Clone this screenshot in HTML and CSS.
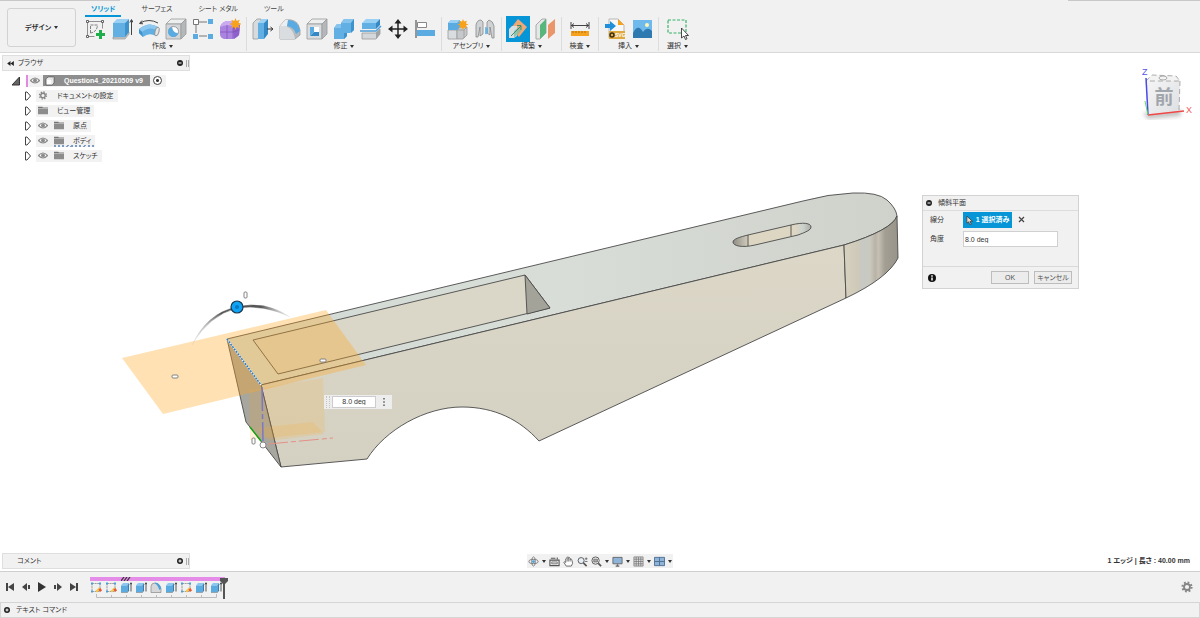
FILE: index.html
```html
<!DOCTYPE html>
<html lang="ja">
<head>
	<meta charset="utf-8">
	<title>Question4_20210509 v9</title>
	<link rel="stylesheet" href="styles.css">
</head>
<body>
	<svg class="defs" aria-hidden="true">
		<symbol id="i-eye" viewBox="0 0 10 8">
			<path d="M.5 4Q5-1 9.500 4Q5 9 .5 4Z" fill="#fff" stroke="#8c8c8c" stroke-width="1.200"/>
			<circle cx="5" cy="4" r="2" fill="#8c8c8c"/>
		</symbol>
		<symbol id="i-folder" viewBox="0 0 10 8">
			<path d="M0 0h4l1 1h5v1H0z" fill="#777"/>
			<path d="M0 2.500h10V8H0z" fill="#8c8c8c"/>
		</symbol>
		<symbol id="i-gear" viewBox="0 0 12 12">
			<circle cx="6" cy="6" r="4.600" fill="none" stroke="#858585" stroke-width="2" stroke-dasharray="1.800 1.810"/>
			<circle cx="6" cy="6" r="3" fill="none" stroke="#858585" stroke-width="1.800"/>
		</symbol>
		<symbol id="i-open" viewBox="0 0 8 10">
			<path d="M1.500 1H3L6.500 5L3 9H1.500Z" fill="#fff" stroke="#444" stroke-linejoin="round"/>
		</symbol>
		<symbol id="i-minus" viewBox="0 0 8 8">
			<circle cx="4" cy="4" r="3" fill="#222"/>
			<path d="M2.500 4h3" stroke="#fff"/>
		</symbol>
		<symbol id="i-plus" viewBox="0 0 8 8">
			<circle cx="4" cy="4" r="3" fill="#222"/>
			<path d="M2.500 4h3M4 2.500v3" stroke="#fff"/>
		</symbol>
		<symbol id="i-sketch" viewBox="0 0 12 12">
			<path d="M2 2h8M2 2v8M2 10h8M10 2v8" stroke="#888" stroke-width=".8" stroke-dasharray="2 .6"/>
			<path d="M1 1h2v2H1zM9 1h2v2H9zM1 9h2v2H1z" fill="#4c9fd8"/>
			<path d="M5.500 9.500L9 6l1.500 1.500L7 11z" fill="#f6c744"/>
			<path d="M8.500 8l2-1.500L12 9l-2 1.500z" fill="#e8523b"/>
		</symbol>
		<symbol id="i-extrude" viewBox="0 0 12 12">
			<path d="M1 4l2-2.500h6L7.500 4z" fill="#8bc7f0"/>
			<path d="M1 4h6.500v7H1z" fill="#5aabe2"/>
			<path d="M7.500 4L9 1.500V9l-1.500 2z" fill="#2f7fb8"/>
			<path d="M1 11h6.500L9 9" fill="none" stroke="#888" stroke-width=".6"/>
			<path d="M11 10V1.500M9.800 3L11 1.200 12 3" stroke="#333" stroke-width=".8" fill="none"/>
		</symbol>
		<symbol id="i-fillet" viewBox="0 0 12 12">
			<path d="M1 11V5Q1 1.500 5 1.500Q10.500 2 11 8v3z" fill="#d5d7d8" stroke="#888" stroke-width=".7"/>
			<path d="M4.500 1.500Q9 .5 11.300 7l-2 1.500Q8 3.500 4.500 1.500z" fill="#4c9fd8"/>
		</symbol>
	</svg>

	<header class="ribbon">
		<button class="workspace">デザイン <i class="caret"></i></button>
		<div class="ribbon-main">
			<nav class="tabs">
				<a class="tab active" href="#solid">ソリッド</a>
				<a class="tab" href="#surface">サーフェス</a>
				<a class="tab" href="#sheet">シート メタル</a>
				<a class="tab" href="#tools">ツール</a>
			</nav>
			<div class="groups">
				<div class="group">
					<div class="icons">
						<button class="tool" aria-label="スケッチを作成"><svg viewBox="0 0 22 22"><path d="M3.500 3.500h15v7M3.500 3.500v15h7" fill="none" stroke="#777" stroke-width=".8"/><path d="M6.500 15V7h7Q13 14 6.500 15z" fill="none" stroke="#666" stroke-width=".8" stroke-dasharray="3 1"/><path d="M2.500 2.500h2v2h-2zM17.500 2.500h2v2h-2zM2.500 17.500h2v2h-2z" fill="#fff" stroke="#555" stroke-width=".9"/><path d="M16.500 12v9M12 16.500h9" stroke="#1fae4c" stroke-width="3"/></svg></button>
						<button class="tool" aria-label="押し出し"><svg viewBox="0 0 22 22"><path d="M2 19h12l4-5v2l-4 5H2z" fill="#c9cccd" stroke="#888" stroke-width=".6"/><path d="M2 5l4-4h12l-4 4z" fill="#9ad0f3"/><path d="M2 5h12v14H2z" fill="#62afe4"/><path d="M14 5l4-4v13l-4 5z" fill="#3f93cd"/><path d="M20.500 17V2M18.800 4.500l1.700-3 1.500 3" fill="none" stroke="#444"/></svg></button>
						<button class="tool" aria-label="回転"><svg viewBox="0 0 22 22"><path d="M2 5Q11 0 20 5" fill="none" stroke="#444"/><path d="M4 2.500L1.500 5.500 5 5.800" fill="none" stroke="#444"/><path d="M1 11Q11 3 20 9l-2 9Q11 14 5 19L1 15z" fill="#62afe4"/><path d="M1 11Q11 3 20 9l-1 3Q11 8 4 14z" fill="#8cc8ef"/><path d="M1 11l3 3 1 5-4-4z" fill="#3f93cd"/><ellipse cx="19" cy="13.500" rx="2" ry="4.500" fill="#e4e6e7" stroke="#888" stroke-width=".8" transform="rotate(15 19 13.500)"/></svg></button>
						<button class="tool" aria-label="穴"><svg viewBox="0 0 22 22"><path d="M1 6l5-5h15l-5 5z" fill="#eceeef" stroke="#999" stroke-width=".8"/><path d="M1 6h15v15H1z" fill="#d3d6d8" stroke="#999" stroke-width=".8"/><path d="M16 6l5-5v15l-5 5z" fill="#b4b8bb" stroke="#999" stroke-width=".8"/><circle cx="8.500" cy="13.500" r="5" fill="#fff" stroke="#888" stroke-width=".8"/><path d="M7 9a5 5 0 1 0 6 6Q8 15 7 9z" fill="#5aabe2"/></svg></button>
						<button class="tool" aria-label="パターン"><svg viewBox="0 0 22 22"><path d="M7 4h8M4 7v8M7 18h8" fill="none" stroke="#777"/><path d="M1.500 1.500h5v5h-5z" fill="#fff" stroke="#777"/><path d="M16 1h5v5h-5zM1 16h5v5H1zM16 16h5v5h-5z" fill="#5aabe2"/></svg></button>
						<button class="tool" aria-label="フォームを作成"><svg viewBox="0 0 22 22"><path d="M1 9Q2 5 7 3h9q5 2 5 6l-1 8q-3 4-8 4H5q-4-1-4-5z" fill="#ab84e0"/><path d="M1 9q6-3 13-1l2-5H7Q2 5 1 9z" fill="#cbabf0"/><path d="M14 8l7-1-1 10-5 4z" fill="#8f60cb"/><path d="M8 7v14M1 14h13l6-2M14 8v13" fill="none" stroke="#7d4fb8" stroke-width=".7"/><path d="M16.500 0l1.200 3 3-1.200-1.200 3 3 1.200-3 1.200 1.200 3-3-1.200-1.200 3-1.200-3-3 1.200 1.200-3-3-1.200 3-1.200-1.200-3 3 1.200z" fill="#f6a21d"/></svg></button>
					</div>
					<button class="group-name">作成 <i class="caret"></i></button>
				</div>
				<div class="group">
					<div class="icons">
						<button class="tool" aria-label="プレス/プル"><svg viewBox="0 0 22 22"><path d="M1 5l4-4h4v16l-3 4H1z" fill="#d8dbdd" stroke="#999" stroke-width=".8"/><path d="M6 5l4-4h6l-4 4z" fill="#9ad0f3"/><path d="M6 5h6v16H6z" fill="#62afe4"/><path d="M12 5l4-4v15l-4 5z" fill="#3488c4"/><path d="M15 11h5M18.500 9l2.500 2-2.500 2" fill="none" stroke="#333"/></svg></button>
						<button class="tool" aria-label="フィレット"><svg viewBox="0 0 22 22"><path d="M1 8l5-6Q19 0 21 12v5l-5 4H1z" fill="#b7bbbe" stroke="#999" stroke-width=".8"/><path d="M1 8q13-1 15 13H1z" fill="#dadddf"/><path d="M1 8l5-6h4L8 8.500z" fill="#eceeef"/><path d="M9 2Q19 2 21 13l-4 3Q15 9 8 8z" fill="#5aabe2"/></svg></button>
						<button class="tool" aria-label="シェル"><svg viewBox="0 0 22 22"><path d="M1 6l5-5h15l-5 5z" fill="#eceeef" stroke="#999" stroke-width=".8"/><path d="M1 6h15v15H1z" fill="#dadddf" stroke="#999" stroke-width=".8"/><path d="M16 6l5-5v15l-5 5z" fill="#b4b8bb" stroke="#999" stroke-width=".8"/><path d="M4 9h9v9H4z" fill="#fff"/><path d="M4 9h4v5l-4 4z" fill="#5aabe2"/><path d="M4 18l4-4h5v4z" fill="#3488c4"/></svg></button>
						<button class="tool" aria-label="結合"><svg viewBox="0 0 22 22"><path d="M8 5l3-4h10v11l-4 3h-3v3l-3 3H1V10l3-4h4z" fill="#62afe4"/><path d="M8 5l3-4h10l-3 4zM1 10l3-4h4v4z" fill="#86c4ed"/><path d="M18 5l3-4v11l-3 3zM11 15h3v3l-3 3z" fill="#3f93cd"/></svg></button>
						<button class="tool" aria-label="面をオフセット"><svg viewBox="0 0 22 22"><path d="M2 5l4-4h14l-4 4z" fill="#9ad0f3"/><path d="M2 5h14v6H2z" fill="#62afe4"/><path d="M16 5l4-4v6l-4 4z" fill="#3488c4"/><path d="M0 13h16l5-5" fill="none" stroke="#4c9fd8" stroke-width="1.500"/><path d="M2 15h14l4-4v5l-4 5H2z" fill="#d5d8da" stroke="#999" stroke-width=".8"/><path d="M16 15l4-4v5l-4 5z" fill="#9ea3a6"/></svg></button>
						<button class="tool" aria-label="移動"><svg viewBox="0 0 22 22"><path d="M11 3v16M3 11h16" stroke="#222" stroke-width="1.500"/><path d="M11 1l3.500 4.500h-7zM11 21l3.500-4.500h-7zM1 11l4.500-3.500v7zM21 11l-4.500-3.500v7z" fill="#222"/></svg></button>
						<button class="tool" aria-label="位置合わせ"><svg viewBox="0 0 22 22"><path d="M2 2v18" stroke="#777" stroke-width="1.500"/><path d="M3.500 4.500h9v5h-9z" fill="#fff" stroke="#888"/><path d="M3 12h18v6H3z" fill="#5aabe2"/></svg></button>
					</div>
					<button class="group-name">修正 <i class="caret"></i></button>
				</div>
				<div class="group">
					<div class="icons">
						<button class="tool" aria-label="新規コンポーネント"><svg viewBox="0 0 22 22"><path d="M1 12h9v9H1z" fill="#dadddf" stroke="#999" stroke-width=".8"/><path d="M10 12l3-3h7v8l-4 4h-6z" fill="#c5c9cb" stroke="#999" stroke-width=".8"/><path d="M10 12h7l3-3M17 12v8" fill="none" stroke="#999" stroke-width=".8"/><path d="M1 5l3-3h9v7l-3 3H1z" fill="#5aabe2"/><path d="M1 5l3-3h9l-3 3z" fill="#9ad0f3"/><path d="M16 1l1 2.500 2.800-.8-.8 2.800 2.500 1-2.500 1 .8 2.800-2.800-.8-1 2.500-1-2.500-2.800.8.800-2.800-2.500-1 2.500-1-.8-2.800 2.800.8z" fill="#f6a21d"/></svg></button>
						<button class="tool" aria-label="ジョイント"><svg viewBox="0 0 22 22"><path d="M2 19V7q1-5 5-5l2 2v12l-3 2V9L4 19zM20 20V8q-1-5-5-6l-2 2v11l3 2V9l2 11z" fill="#d0d3d5" stroke="#888" stroke-width=".8"/><path d="M11 9q3 0 3 2v4q-1 2-3 1" fill="#5aabe2" opacity=".8"/></svg></button>
					</div>
					<button class="group-name">アセンブリ <i class="caret"></i></button>
				</div>
				<div class="group">
					<div class="icons">
						<button class="tool selected" aria-label="傾斜平面"><svg viewBox="0 0 22 22"><path d="M11 1l9 8-8 10-8-9z" fill="#f0a877"/><path d="M2 11l3-3h5v10l-3 2H2z" fill="#d9dee1"/><path d="M7 13l7-6v6l-7 7z" fill="#7fbda7" opacity=".8"/><path d="M4 18l10-10M14 12V7.500h-4" fill="none" stroke="#3b8f6d"/></svg></button>
						<button class="tool" aria-label="オフセット平面"><svg viewBox="0 0 22 22"><path d="M2 7l6-6h4v14l-6 6H2z" fill="#e4e6e7" stroke="#999" stroke-width=".8"/><path d="M6 7l6-6v14l-6 6z" fill="#57b77b"/><path d="M14 7l7-6v14l-7 6z" fill="#ea966a"/></svg></button>
					</div>
					<button class="group-name">構築 <i class="caret"></i></button>
				</div>
				<div class="group">
					<div class="icons">
						<button class="tool" aria-label="計測"><svg viewBox="0 0 22 22"><path d="M2 4v7M20 4v7M2 7.500h18M5 5.500l-2.500 2L5 9.500M17 5.500l2.500 2-2.500 2" fill="none" stroke="#444"/><path d="M2 13h18v5H2z" fill="#f6a21d"/><path d="M4 13v2M7 13v2M10 13v2M13 13v2M16 13v2" stroke="#9a6510" stroke-width=".8"/></svg></button>
					</div>
					<button class="group-name">検査 <i class="caret"></i></button>
				</div>
				<div class="group">
					<div class="icons">
						<button class="tool" aria-label="SVG を挿入"><svg viewBox="0 0 22 22"><path d="M5 1h9l6 6v13H5z" fill="#f7f7f7" stroke="#aaa" stroke-width=".8"/><path d="M14 1l6 6h-6z" fill="#f6a21d"/><path d="M1 6h5V3l6 5-6 5v-3H1z" fill="#1f8fdc"/><path d="M5 13h16v8H5z" fill="#e0a93f"/><circle cx="8" cy="17" r="2" fill="none" stroke="#40300c" stroke-width="1.500"/><text class="badge-text" x="11" y="19">SVG</text></svg></button>
						<button class="tool" aria-label="キャンバス"><svg viewBox="0 0 22 22"><path d="M2 2h19v18H2z" fill="#6fbaec"/><path d="M2 15Q7 5 12 14q4-6 9-1v7H2z" fill="#2d79b0"/><circle cx="16" cy="7" r="2" fill="#fff5b8"/></svg></button>
					</div>
					<button class="group-name">挿入 <i class="caret"></i></button>
				</div>
				<div class="group last">
					<div class="icons">
						<button class="tool" aria-label="選択"><svg viewBox="0 0 22 22"><path d="M1 2h18v13H1z" fill="none" stroke="#39b36a" stroke-width="1.200" stroke-dasharray="3 1.500"/><path d="M14.500 10v10l2.500-2 1.500 3.500 1.500-.7-1.500-3.300h3z" fill="#fff" stroke="#333" stroke-width=".9"/></svg></button>
					</div>
					<button class="group-name">選択 <i class="caret"></i></button>
				</div>
			</div>
		</div>
	</header>

	<main class="viewport">
		<svg class="model" viewBox="0 53 1200 518" role="img" aria-label="モデル">
			<defs>
				<linearGradient id="top" x1="0" x2="1"><stop offset="0" stop-color="#d3dbd6"/><stop offset=".5" stop-color="#d8ddd7"/><stop offset="1" stop-color="#cfd2cb"/></linearGradient>
				<linearGradient id="side" x1="0" y1="0" x2="0" y2="1"><stop offset="0" stop-color="#dcd7c7"/><stop offset="1" stop-color="#d4d1c3"/></linearGradient>
				<linearGradient id="nose" x1="0" x2="1"><stop offset="0" stop-color="#d7d1c0"/><stop offset=".25" stop-color="#cfc9b9"/><stop offset=".36" stop-color="#c6c9c4"/><stop offset=".48" stop-color="#cac9c0"/><stop offset=".58" stop-color="#b9b3a6"/><stop offset=".64" stop-color="#c5c0b3"/><stop offset=".76" stop-color="#a39e92"/><stop offset="1" stop-color="#98948a"/></linearGradient>
				<linearGradient id="slot" x1="0" x2="1"><stop offset="0" stop-color="#8f8d84"/><stop offset=".19" stop-color="#d0cbbb"/><stop offset=".2" stop-color="#dcd6c3"/><stop offset=".8" stop-color="#dcd6c3"/><stop offset=".9" stop-color="#ccd1cd"/><stop offset="1" stop-color="#a9aaa3"/></linearGradient>
				<linearGradient id="arc" x1="0" x2="1"><stop offset="0" stop-color="#bbb" stop-opacity=".2"/><stop offset=".3" stop-color="#555"/><stop offset=".7" stop-color="#555"/><stop offset="1" stop-color="#bbb" stop-opacity=".2"/></linearGradient>
			</defs>
			<g class="solid">
				<path d="M227 339L803 201Q828 194 853 193Q878 192 887 200Q896 208 897 216Q892 230 844 245L261 385Z" fill="url(#top)"/>
				<path d="M261 385L844 245L846 298L539 441C520 420 495 407 462 407C425 407 385 430 367 459L281 467Z" fill="url(#side)"/>
				<path d="M844 245Q892 230 897 216L898 258Q888 278 846 298Z" fill="url(#nose)"/>
				<path d="M227 339L261 385L281 467L246 422Z" fill="#a7a69f"/>
				<path d="M253 340L525 275L550 308L278 374Z" fill="#dad7c8"/>
				<path d="M525 275L550 308L527 314Z" fill="#a4a39a"/>
				<path d="M748 235L791 225C803 222 811 223 811 227C811 230 806 232 798 235L755 245C742 248 733 246 733 242C733 239 740 237 748 235Z" fill="url(#slot)"/>
				<path d="M748 235v11M791 225v11" fill="none"/>
			</g>
			<!-- preview planes -->
			<path class="plane" d="M122 358L326 310L366 365L163 414Z"/>
			<path class="plane faint" d="M249 390L323 378L325 432L250 440Z"/>
			<path class="plane faint" d="M257 428L313 422L324 434L270 441Z"/>
			<path d="M227 339L261 385" stroke="#fff" stroke-width="1.500"/>
			<path d="M227 339L261 385" stroke="#2d7cc0" stroke-width="1.500" stroke-dasharray="2 1"/>
			<!-- origin axes -->
			<path d="M262 387L263 441" stroke="#7b79c4" stroke-width="1.500" stroke-dasharray="24 3 5 3"/>
			<path d="M268 444L333 438" stroke="#e58f85" stroke-dasharray="20 3 5 3"/>
			<path d="M250 427L261 441" stroke="#12a512" stroke-width="1.500"/>
			<circle cx="263" cy="445" r="3" fill="#fff" stroke="#888"/>
			<!-- rotation handle -->
			<path d="M192 345Q207 313 237 307Q265 300 290 317Q264 304 237 308Q209 315 192 345Z" fill="url(#arc)" stroke="url(#arc)" stroke-width=".5"/>
			<circle cx="237" cy="307" r="6" fill="#0fa3f5" stroke="#17384d" stroke-width="1.200"/>
			<circle cx="237" cy="307" r="2" fill="#0878bd"/>
			<g fill="#fff" stroke="#777" stroke-width=".9">
				<rect x="244" y="292" width="3" height="6" rx="1"/>
				<rect x="252" y="438" width="3" height="6" rx="1"/>
				<rect x="172" y="375" width="6" height="3" rx="1"/>
				<rect x="320" y="359" width="6" height="3" rx="1"/>
			</g>
		</svg>

		<aside class="browser">
			<div class="bar">
				<svg class="icon-rewind" viewBox="0 0 8 6"><path d="M4 0v6L0 3zM8 0v6L4 3z" fill="#222"/></svg>
				<span class="bar-title">ブラウザ</span>
				<button class="round" aria-label="閉じる"><svg viewBox="0 0 8 8"><use href="#i-minus"/></svg></button>
				<i class="grip"></i>
			</div>
			<ul class="tree">
				<li class="node root">
					<button class="expander" aria-label="折りたたむ"><svg viewBox="0 0 8 10"><path d="M0 9L7.500 1V9Z" fill="#666" stroke="#333"/></svg></button>
					<div class="chip">
						<svg class="icon-eye" viewBox="0 0 10 8"><use href="#i-eye"/></svg>
						<span class="root-name"><svg class="icon-cube" viewBox="0 0 10 10"><path d="M1 3l2-2h6v6L7 9H1z" fill="#fff" stroke="#555" stroke-width=".8"/><path d="M1 3h6v6M7 3l2-2" fill="none" stroke="#bbb" stroke-width=".6"/></svg>Question4_20210509 v9</span>
						<input class="activate" type="radio" name="active" aria-label="アクティブ" checked>
					</div>
				</li>
				<li class="node">
					<button class="expander" aria-label="展開"><svg viewBox="0 0 8 10"><use href="#i-open"/></svg></button>
					<div class="chip"><svg class="icon-eye" viewBox="0 0 12 12"><use href="#i-gear"/></svg><span>ドキュメントの設定</span></div>
				</li>
				<li class="node">
					<button class="expander" aria-label="展開"><svg viewBox="0 0 8 10"><use href="#i-open"/></svg></button>
					<div class="chip"><svg class="icon-eye" viewBox="0 0 10 8"><use href="#i-folder"/></svg><span>ビュー管理</span></div>
				</li>
				<li class="node">
					<button class="expander" aria-label="展開"><svg viewBox="0 0 8 10"><use href="#i-open"/></svg></button>
					<div class="chip"><svg class="icon-eye" viewBox="0 0 10 8"><use href="#i-eye"/></svg><svg class="icon-eye" viewBox="0 0 10 8"><use href="#i-folder"/></svg><span>原点</span></div>
				</li>
				<li class="node">
					<button class="expander" aria-label="展開"><svg viewBox="0 0 8 10"><use href="#i-open"/></svg></button>
					<div class="chip"><svg class="icon-eye" viewBox="0 0 10 8"><use href="#i-eye"/></svg><div class="pending"><svg class="icon-eye" viewBox="0 0 10 8"><use href="#i-folder"/></svg><span>ボディ</span></div></div>
				</li>
				<li class="node">
					<button class="expander" aria-label="展開"><svg viewBox="0 0 8 10"><use href="#i-open"/></svg></button>
					<div class="chip"><svg class="icon-eye" viewBox="0 0 10 8"><use href="#i-eye"/></svg><svg class="icon-eye" viewBox="0 0 10 8"><use href="#i-folder"/></svg><span>スケッチ</span></div>
				</li>
			</ul>
		</aside>

		<svg class="viewcube" viewBox="0 0 58 58" role="img" aria-label="ビューキューブ">
			<defs>
				<linearGradient id="face" x1="0" y1="0" x2="1" y2="1"><stop offset="0" stop-color="#f7f7f8"/><stop offset="1" stop-color="#dedfe2"/></linearGradient>
				<filter id="soft"><feGaussianBlur stdDeviation="2"/></filter>
			</defs>
			<path d="M5 48L42 44L43 51L10 54Z" fill="#999" opacity=".6" filter="url(#soft)"/>
			<path d="M8 16L14 10L38 11L42 16L41 46L10 50Z" fill="url(#face)"/>
			<path d="M8 16L14 10L38 11L42 16Z" fill="#f3f3f4" stroke="#999" stroke-width=".8" stroke-dasharray="5 3"/>
			<path d="M42 16L41 46" stroke="#999" stroke-width=".8" stroke-dasharray="5 3"/>
			<ellipse cx="25" cy="13" rx="4" ry="2" fill="none" stroke="#aaa"/>
			<text class="cube-face" x="26" y="39">前</text>
			<path d="M8 13L10 50" stroke="#4a48e8" stroke-width="1.500"/>
			<path d="M10 50L46 46" stroke="#f04848" stroke-width="1.500"/>
			<path d="M10 50L7 36" stroke="#63d863"/>
			<text class="axis-z" x="4" y="10">Z</text>
			<text class="axis-x" x="48" y="48">X</text>
		</svg>

		<form class="angle" action="#">
			<i class="handle"></i>
			<input aria-label="角度" value="8.0 deg">
			<button type="button" aria-label="その他"><svg viewBox="0 0 4 10"><path d="M1 0h2v2H1zM1 4h2v2H1zM1 8h2v2H1z" fill="#666"/></svg></button>
		</form>

		<form class="dialog" action="#">
			<div class="dialog-head">
				<svg class="icon-dot" viewBox="0 0 8 8"><use href="#i-minus"/></svg>
				<span>傾斜平面</span>
			</div>
			<div class="dialog-body">
				<label for="pick">線分</label>
				<div class="field">
					<button id="pick" class="pick" type="button"><svg viewBox="0 0 8 10"><path d="M1 0v8l2-1.500L4.500 10 6 9.300 4.500 6H7.500z" fill="#f2d9c8" stroke="#333" stroke-width=".8"/></svg>1 選択済み</button>
					<button class="clear" type="button" aria-label="クリア"><svg viewBox="0 0 8 8"><path d="M1 1l5 5M6 1L1 6" stroke="#444" stroke-width="1.200"/></svg></button>
				</div>
				<label for="deg">角度</label>
				<div class="field"><input id="deg" class="deg" value="8.0 deg"></div>
			</div>
			<div class="dialog-foot">
				<svg class="icon-info" viewBox="0 0 10 10"><circle cx="5" cy="5" r="4" fill="#111"/><path d="M5 4.500v3M5 2.300v1.400" stroke="#fff" stroke-width="1.500"/></svg>
				<button class="push" type="submit">OK</button>
				<button class="push" type="button">キャンセル</button>
			</div>
		</form>

		<div class="bar comments">
			<span class="bar-title">コメント</span>
			<button class="round" aria-label="追加"><svg viewBox="0 0 8 8"><use href="#i-plus"/></svg></button>
			<i class="grip"></i>
		</div>

		<div class="navbar">
			<button aria-label="オービット"><svg viewBox="0 0 12 12"><ellipse cx="6" cy="6" rx="5" ry="2.300" fill="none" stroke="#777"/><ellipse cx="6" cy="6" rx="2" ry="5" fill="none" stroke="#777"/><circle cx="6" cy="6" r="1.500" fill="#4c9fd8"/></svg><i class="caret"></i></button>
			<button aria-label="ビュー正面"><svg viewBox="0 0 12 12"><path d="M1 4.500h10v6H1zM2 2.500h5M9 1.500v2" fill="none" stroke="#555" stroke-width="1.200"/><path d="M3 6.500h6v2H3z" fill="none" stroke="#777"/></svg></button>
			<button aria-label="画面移動"><svg viewBox="0 0 12 12"><path d="M3.500 11L1 7q0-1.500 2 0V3q.8-1.500 1.600 0V1.500q.8-1.500 1.600 0v1q.8-1.500 1.600 0v1.300q1.200-1.300 1.700 0L10.500 8 9 11z" fill="#fff" stroke="#555" stroke-width=".9"/><path d="M4.600 3v3M6.200 2v4M7.800 3v3" stroke="#555" stroke-width=".8"/></svg></button>
			<button aria-label="ズーム"><svg viewBox="0 0 12 12"><circle cx="4.500" cy="5" r="3.300" fill="#e5eff5" stroke="#555"/><path d="M7 7.500l3.500 3.500" stroke="#555" stroke-width="1.800"/><path d="M8.500 3h3M10 1.500v3M8.500 6h3" stroke="#555" stroke-width=".8"/></svg></button>
			<button aria-label="フィット"><svg viewBox="0 0 12 12"><circle cx="5" cy="5" r="4" fill="#eee" stroke="#555"/><path d="M3 3.500h4v3H3z" fill="#aaa" stroke="#666" stroke-width=".8"/><path d="M8 8l3 3" stroke="#555" stroke-width="1.800"/></svg><i class="caret"></i></button>
			<button aria-label="表示設定"><svg viewBox="0 0 12 12"><path d="M1 1.500h10v7H1z" fill="#8fb4da" stroke="#666"/><path d="M4 11h4M6 9v2" stroke="#666" stroke-width="1.500"/></svg><i class="caret"></i></button>
			<button aria-label="グリッド"><svg viewBox="0 0 12 12"><path d="M1 1h10v10H1z" fill="#ddd"/><path d="M1 1h10v10H1zM3.500 1v10M6 1v10M8.500 1v10M1 3.500h10M1 6h10M1 8.500h10" fill="none" stroke="#777" stroke-width=".8"/></svg><i class="caret"></i></button>
			<button aria-label="ビューポート"><svg viewBox="0 0 12 12"><path d="M.5 1.500h11v9H.5z" fill="#8fb4da" stroke="#4d6d91"/><path d="M6 1.500v9M.5 6h11" stroke="#4d6d91"/></svg><i class="caret"></i></button>
		</div>

		<p class="status">1 エッジ | 長さ : 40.00 mm</p>
	</main>

	<section class="timeline">
		<div class="player">
			<button aria-label="先頭"><svg viewBox="0 0 10 10"><path d="M1 1h2v8H1zM9 1v8L3 5z" fill="#444"/></svg></button>
			<button aria-label="前へ"><svg viewBox="0 0 10 10"><path d="M6 1v8L1 5zM7 3h2v4H7z" fill="#444"/></svg></button>
			<button aria-label="再生"><svg viewBox="0 0 10 10"><path d="M1 0l8 5-8 5z" fill="#333"/></svg></button>
			<button aria-label="次へ"><svg viewBox="0 0 10 10"><path d="M4 1l5 4-5 4zM1 3h2v4H1z" fill="#444"/></svg></button>
			<button aria-label="末尾"><svg viewBox="0 0 10 10"><path d="M7 1h2v8H7zM1 1l6 4-6 4z" fill="#444"/></svg></button>
		</div>
		<div class="history">
			<div class="track"><svg viewBox="0 0 10 4"><path d="M0 4l3-4M3 4l3-4M6 4l3-4" stroke="#333" stroke-width="1.200"/></svg></div>
			<div class="features">
				<button aria-label="スケッチ1"><svg viewBox="0 0 12 12"><use href="#i-sketch"/></svg></button>
				<button aria-label="スケッチ2"><svg viewBox="0 0 12 12"><use href="#i-sketch"/></svg></button>
				<button aria-label="押し出し1"><svg viewBox="0 0 12 12"><use href="#i-extrude"/></svg></button>
				<button aria-label="押し出し2"><svg viewBox="0 0 12 12"><use href="#i-extrude"/></svg></button>
				<button aria-label="フィレット1"><svg viewBox="0 0 12 12"><use href="#i-fillet"/></svg></button>
				<button aria-label="押し出し3"><svg viewBox="0 0 12 12"><use href="#i-extrude"/></svg></button>
				<button aria-label="スケッチ3"><svg viewBox="0 0 12 12"><use href="#i-sketch"/></svg></button>
				<button aria-label="押し出し4"><svg viewBox="0 0 12 12"><use href="#i-extrude"/></svg></button>
				<button aria-label="押し出し5"><svg viewBox="0 0 12 12"><use href="#i-extrude"/></svg></button>
			</div>
			<svg class="ticks" viewBox="0 0 135 4"><path d="M6.500 0v3.500h120V0M21.500 1v2M36.500 1v2M51.500 1v2M66.500 1v2M81.500 1v2M96.500 1v2M111.500 1v2" fill="none" stroke="#bbb"/></svg>
			<svg class="marker" viewBox="0 0 8 21"><path d="M0 0h8v3L5 6v15H3V6L0 3z" fill="#555"/></svg>
		</div>
		<button class="settings" aria-label="設定"><svg viewBox="0 0 12 12"><use href="#i-gear"/></svg></button>
	</section>

	<footer class="command">
		<button class="round" aria-label="展開"><svg viewBox="0 0 8 8"><use href="#i-plus"/></svg></button>
		<span>テキスト コマンド</span>
	</footer>
</body>
</html>
```
FILE: styles.css
```css
* {
	box-sizing: border-box;
}
body {
	display: flex;
	flex-direction: column;
	margin: 0;
	min-height: 100vh;
	font-family: "Liberation Sans", "Noto Sans CJK JP", sans-serif;
	font-size: 7px;
	font-feature-settings: "palt";
	line-height: 10px;
	color: #333;
	background-color: white;
}
button, input {
	margin: 0;
	padding: 0;
	font: inherit;
	font-feature-settings: inherit;
	color: inherit;
	background: none;
	border: 0;
	border-radius: 0;
}
button {
	cursor: pointer;
}
svg {
	display: block;
	flex-shrink: 0;
}
.defs {
	position: absolute;
	width: 0;
	height: 0;
}
.caret {
	display: inline-block;
	margin-left: 1px;
	border: solid 2px transparent;
	border-top: solid 3px #333;
	border-bottom: 0;
	vertical-align: middle;
}

/* ribbon */
.ribbon {
	display: flex;
	height: 53px;
	background-color: #f1f1f1;
	background-image: linear-gradient(#c8c8c8, #c8c8c8), linear-gradient(#c8c8c8, #c8c8c8);
	background-repeat: no-repeat;
	background-position: 0 0, 100% 0;
	background-size: 10% 1px, 11% 1px;
	border-bottom: solid 1px #d9d9d9;
}
.workspace {
	width: 69px;
	height: 39px;
	margin: 8px 3px 0 7px;
	font-weight: bold;
	border: solid 1px #d2d2d2;
	border-radius: 3px;
}
.tabs {
	display: flex;
	gap: 14px;
	height: 17px;
	padding-left: 6px;
}
.tab {
	padding: 4px 6px 0;
	color: #444;
	text-decoration: none;
	white-space: nowrap;
}
.tab.active {
	font-weight: bold;
	color: #0696d7;
	border-bottom: solid 2px #0696d7;
}
.groups {
	display: flex;
}
.group {
	display: flex;
	flex-direction: column;
	align-items: center;
	min-width: 37px;
	padding: 0 5px;
	border-right: solid 1px #dcdcdc;
}
.group.last {
	border-right: 0;
}
.icons {
	display: flex;
	gap: 5px;
}
.tool {
	width: 22px;
	height: 24px;
	padding: 1px 0;
}
.tool.selected {
	background-color: #0696d7;
	box-shadow: 0 0 0 1px #0696d7;
}
.tool svg {
	width: 22px;
	height: 22px;
}
.badge-text {
	font-size: 5px;
	font-weight: bold;
	fill: #fff;
}
.group-name {
	white-space: nowrap;
}

/* viewport and what floats over it */
.viewport {
	position: relative;
	flex: 1;
	min-height: 300px;
	overflow: hidden;
}
.model {
	position: absolute;
	width: 100%;
	height: 100%;
}
.solid path {
	stroke: #4a4a4a;
	stroke-width: .9;
	stroke-linejoin: round;
}
.plane {
	fill: #ffa820;
	fill-opacity: .34;
}
.plane.faint {
	fill-opacity: .16;
}
.bar {
	display: flex;
	align-items: center;
	width: 188px;
	height: 16px;
	padding: 0 0 0 4px;
	background-color: #f1f1f1;
	border: solid 1px #dedede;
}
.bar-title {
	flex: 1;
}
.grip {
	width: 3px;
	height: 7px;
	margin-left: 2px;
	border: solid #aaa;
	border-width: 0 1px;
}
.round, .round svg, .icon-dot {
	width: 8px;
	height: 8px;
}
.browser {
	position: absolute;
	top: 2px;
	left: 2px;
}
.icon-rewind {
	width: 7px;
	height: 5px;
	margin-right: 4px;
}
.tree {
	margin: 2px 0 0;
	padding: 0;
	list-style: none;
}
.node {
	display: flex;
	align-items: center;
	gap: 4px;
	height: 15px;
	padding-left: 22px;
}
.node.root {
	padding-left: 10px;
	gap: 6px;
}
.expander, .expander svg {
	width: 8px;
	height: 10px;
}
.chip {
	display: flex;
	align-items: center;
	gap: 6px;
	height: 12px;
	padding: 0 4px 0 2px;
	background-color: #f2f2f2;
	white-space: nowrap;
}
.chip span {
	padding-left: 3px;
}
.root .chip {
	gap: 3px;
	padding: 0 4px 0 2px;
	border-left: solid 2px #e28ae2;
}
.icon-eye {
	width: 10px;
	height: 9px;
}
.icon-cube {
	width: 10px;
	height: 10px;
}
.chip .root-name {
	display: flex;
	align-items: center;
	gap: 9px;
	height: 11px;
	padding: 0 7px 0 2px;
	font-weight: bold;
	color: white;
	background-color: #8e8e8e;
}
.activate {
	width: 9px;
	height: 9px;
	background: radial-gradient(#333 1px, white 2px);
	border: solid 1px #444;
	border-radius: 50%;
	appearance: none;
}
.pending {
	display: flex;
	align-items: center;
	gap: 6px;
	height: 12px;
	margin-right: -4px;
	padding-right: 4px;
	background: repeating-linear-gradient(110deg, #7d9cc4 0 2px, transparent 2px 4px) bottom / 100% 2px no-repeat;
}
.viewcube {
	position: absolute;
	top: 12px;
	right: 4px;
	width: 58px;
	height: 58px;
}
.cube-face {
	font-size: 19px;
	font-weight: bold;
	text-anchor: middle;
	fill: #a0a6ac;
}
.axis-z, .axis-x {
	font-size: 9px;
	fill: #5553e8;
}
.axis-x {
	fill: #f05a5a;
}
.angle {
	position: absolute;
	top: 66%;
	left: 27%;
	display: flex;
	align-items: center;
	height: 14px;
	background-color: #ededed;
}
.handle {
	width: 4px;
	height: 12px;
	margin: 0 2px;
	border: dotted #c4c4c4;
	border-width: 0 1px;
}
.angle input {
	width: 44px;
	height: 12px;
	text-align: center;
	background-color: white;
	border: solid 1px #ccc;
}
.angle button {
	padding: 0 6px;
}
.angle svg {
	width: 4px;
	height: 8px;
}
.dialog {
	position: absolute;
	top: 142px;
	right: 121px;
	width: 157px;
	background-color: #f1f1f1;
	border: solid 1px #d2d2d2;
}
.dialog-head {
	display: flex;
	align-items: center;
	gap: 5px;
	height: 15px;
	padding: 0 2px;
	border-bottom: solid 1px #dcdcdc;
}
.dialog-body {
	display: grid;
	grid-template-columns: 33px 1fr;
	row-gap: 3px;
	align-items: center;
	height: 55px;
	padding: 1px 20px 19px 7px;
}
.field {
	display: flex;
	align-items: center;
	gap: 6px;
}
.pick {
	display: flex;
	align-items: center;
	justify-content: center;
	gap: 3px;
	width: 49px;
	height: 16px;
	font-weight: bold;
	white-space: nowrap;
	color: white;
	background-color: #0696d7;
}
.pick svg {
	width: 7px;
	height: 9px;
}
.clear, .clear svg {
	width: 8px;
	height: 8px;
}
.deg {
	width: 100%;
	height: 16px;
	padding: 0 1px;
	background-color: white;
	border: solid 1px #d0d0d0;
}
.dialog-foot {
	display: flex;
	align-items: center;
	gap: 5px;
	height: 22px;
	padding: 0 6px 0 4px;
	border-top: solid 1px #d9d9d9;
}
.icon-info {
	width: 10px;
	height: 10px;
	margin-right: auto;
}
.push {
	width: 38px;
	height: 13px;
	line-height: 11px;
	white-space: nowrap;
	color: #555;
	background-color: #ececec;
	border: solid 1px #bdbdbd;
}
.comments {
	position: absolute;
	bottom: 2px;
	left: 2px;
	padding-left: 14px;
}
.navbar {
	position: absolute;
	bottom: 3px;
	left: 50%;
	display: flex;
	align-items: center;
	gap: 3px;
	height: 14px;
	padding: 0 1px;
	background-color: #f1f1f1;
	transform: translateX(-50%);
}
.navbar button {
	display: flex;
	align-items: center;
	gap: 2px;
}
.navbar svg {
	width: 11px;
	height: 11px;
}
.status {
	position: absolute;
	right: 10px;
	bottom: 5px;
	margin: 0;
	font-weight: bold;
}

/* timeline */
.timeline {
	display: flex;
	height: 31px;
	padding-left: 5px;
	background-color: #f1f1f1;
	border-top: solid 1px #cfcfcf;
}
.player {
	display: flex;
	align-items: center;
	gap: 6px;
	margin-right: 11px;
}
.player svg {
	width: 10px;
	height: 10px;
}
.player button {
	width: 10px;
}
.history {
	position: relative;
	width: 135px;
	padding-top: 5px;
}
.track {
	height: 4px;
	background-color: #e58be8;
}
.track svg {
	width: 10px;
	height: 4px;
	margin-left: 31px;
}
.features {
	display: flex;
	gap: 3px;
}
.features svg {
	width: 12px;
	height: 13px;
}
.ticks {
	width: 135px;
	height: 4px;
}
.marker {
	position: absolute;
	top: 6px;
	right: -3px;
	width: 8px;
	height: 21px;
}
.settings {
	margin-left: auto;
	padding: 0 7px;
}
.settings svg {
	width: 12px;
	height: 12px;
}
.command {
	display: flex;
	align-items: center;
	gap: 5px;
	height: 16px;
	padding: 0 2px;
	background-color: #f1f1f1;
	border: solid 1px #d5d5d5;
}
```
